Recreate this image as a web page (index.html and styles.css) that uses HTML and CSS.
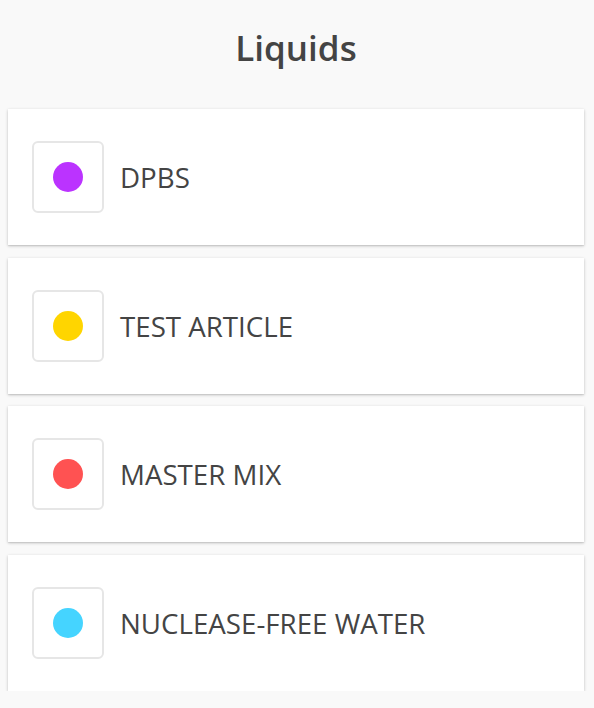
FILE: index.html
```html
<!DOCTYPE html>
<html lang="en">
<head>
<meta charset="utf-8">
<title>Liquids</title>
<link rel="stylesheet" href="styles.css">
</head>
<body>
<main class="page">
  <h1 class="title">Liquids</h1>
  <ul class="list">
    <li class="card">
      <span class="swatch"><span class="dot dot--purple"></span></span>
      <span class="label">DPBS</span>
    </li>
    <li class="card">
      <span class="swatch"><span class="dot dot--yellow"></span></span>
      <span class="label">TEST ARTICLE</span>
    </li>
    <li class="card">
      <span class="swatch"><span class="dot dot--red"></span></span>
      <span class="label">MASTER MIX</span>
    </li>
    <li class="card">
      <span class="swatch"><span class="dot dot--cyan"></span></span>
      <span class="label">NUCLEASE-FREE WATER</span>
    </li>
  </ul>
</main>
</body>
</html>
```
FILE: styles.css
```css
html, body {
  margin: 0;
  padding: 0;
  background: #f9f9f9;
}
body {
  font-family: "Open Sans", "Noto Sans", sans-serif;
  color: #444;
}
.page {
  padding: 0 10px 0 8px;
}
.title {
  margin: 0;
  height: 109px;
  display: flex;
  align-items: center;
  justify-content: center;
  padding-bottom: 15px;
  box-sizing: border-box;
  font-size: 35px;
  font-weight: 600;
  color: #444;
}
.list {
  list-style: none;
  margin: 0;
  padding: 0;
  display: flex;
  flex-direction: column;
  gap: 12.67px;
}
.card {
  background: #fff;
  height: 136px;
  box-sizing: border-box;
  padding: 0 24px;
  display: flex;
  align-items: center;
  gap: 16px;
  box-shadow: 0 1px 3px rgba(0, 0, 0, 0.22), 0 1px 1px rgba(0, 0, 0, 0.06);
}
.swatch {
  width: 72px;
  height: 72px;
  box-sizing: border-box;
  border: 2px solid #e6e6e6;
  border-radius: 6px;
  display: flex;
  align-items: center;
  justify-content: center;
  flex: none;
}
.dot {
  width: 30px;
  height: 30px;
  border-radius: 50%;
}
.dot--purple { background: #bb33ff; }
.dot--yellow { background: #ffd500; }
.dot--red { background: #ff5252; }
.dot--cyan { background: #45d4ff; }
.label {
  font-size: 27.7px;
  font-weight: 400;
  color: #444;
}
```
